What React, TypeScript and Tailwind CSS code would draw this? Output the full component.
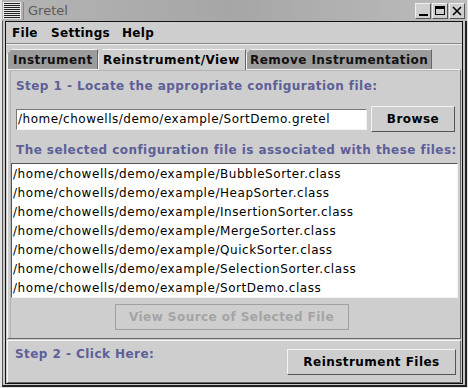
import React from "react";

const files = [
  "/home/chowells/demo/example/BubbleSorter.class",
  "/home/chowells/demo/example/HeapSorter.class",
  "/home/chowells/demo/example/InsertionSorter.class",
  "/home/chowells/demo/example/MergeSorter.class",
  "/home/chowells/demo/example/QuickSorter.class",
  "/home/chowells/demo/example/SelectionSorter.class",
  "/home/chowells/demo/example/SortDemo.class",
];

const bold = { fontFamily: '"DejaVu Sans", "Liberation Sans", sans-serif' };

function WinBtn({ children }: { children: React.ReactNode }) {
  return (
    <div className="w-[16px] h-[16px] border border-t-[#f0f0f0] border-l-[#f0f0f0] border-r-[#555] border-b-[#555] bg-[#cfcfcf] flex items-center justify-center">
      {children}
    </div>
  );
}

const tabClip = { clipPath: "polygon(5px 0, 100% 0, 100% 100%, 0 100%, 0 5px)" };

export default function App() {
  return (
    <div
      className="w-[468px] h-[388px] bg-[#c8c8c8] flex flex-col border-l-2 border-t-0 border-r border-b border-l-[#e4e4e4] border-r-[#e4e4e4] border-b-[#e4e4e4] overflow-hidden"
      style={bold}
    >
      {/* title bar */}
      <div className="h-[21px] flex items-center bg-gradient-to-r from-[#b4b4b4] via-[#a6a6a6] to-[#bdbdbd] pl-[1px] pr-[2px] shrink-0">
        <div className="w-[18px] h-[17px] flex flex-col justify-center gap-[1px] bg-[#e8e8e8] px-[1px] py-[1px]">
          {Array.from({ length: 8 }).map((_, i) => (
            <div key={i} className="h-[1px] bg-[#222]" />
          ))}
        </div>
        <div className="w-[1px] h-[18px] bg-[#888] ml-[2px]" />
        <span className="ml-[4px] text-[13px] text-[#5a5a5a] leading-none" style={{ fontFamily: '"DejaVu Sans", sans-serif', fontWeight: 400 }}>
          Gretel
        </span>
        <div className="ml-auto flex gap-[1px]">
          <WinBtn>
            <div className="w-[9px] h-[2px] bg-black mt-[8px]" />
          </WinBtn>
          <WinBtn>
            <div className="w-[10px] h-[9px] border border-black border-t-[3px]" />
          </WinBtn>
          <WinBtn>
            <svg width="10" height="10" viewBox="0 0 10 10">
              <path d="M1 1 L9 9 M9 1 L1 9" stroke="#000" strokeWidth="1.6" />
            </svg>
          </WinBtn>
        </div>
      </div>

      {/* window frame */}
      <div className="flex-1 flex flex-col border-l border-t-0 border-l-[#555] bg-[#c8c8c8] pl-[2px] pr-[2px] pb-[1px] border-r-2 border-b-2 border-r-[#222] border-b-[#222] min-h-0">
        <div className="flex-1 flex flex-col border border-[#111] bg-[#cecece] min-h-0">
          {/* menu bar */}
          <div className="h-[22px] flex items-center pl-[6px] text-[12px] font-bold text-black tracking-[0.3px] border-b border-b-[#8a8a8a] shrink-0">
            <span className="w-[39px]">File</span>
            <span className="w-[71px]">Settings</span>
            <span>Help</span>
          </div>
          <div className="h-[1px] bg-[#ececec] shrink-0" />

          {/* tabs */}
          <div className="flex items-end h-[24px] pl-[1px] shrink-0 text-[12px] font-bold tracking-[0.45px] whitespace-nowrap">
            <div
              className="h-[20px] w-[91px] bg-[#9c9c9c] border-t border-l border-[#f4f4f4] border-r border-r-[#666] flex items-center pl-[5px] text-[#111]"
              style={tabClip}
            >
              Instrument
            </div>
            <div
              className="h-[21px] w-[148px] bg-[#cecece] border-t border-l border-[#f4f4f4] border-r border-r-[#666] flex items-center pl-[4px] text-black -mb-[1px] relative z-10"
              style={tabClip}
            >
              Reinstrument/View
            </div>
            <div
              className="h-[20px] w-[186px] bg-[#9c9c9c] border-t border-l border-[#f4f4f4] border-r border-r-[#666] flex items-center pl-[3px] text-[#111]"
              style={tabClip}
            >
              Remove Instrumentation
            </div>
          </div>

          {/* tab panel */}
          <div className="mx-[1px] h-[270px] border border-t-[#f4f4f4] border-l-[#f4f4f4] border-r-[#666] border-b-[#666] flex flex-col px-[2px] shrink-0">
            <div className="border border-[#b4b4b4] border-r-0 border-b-0 flex-1 flex flex-col">
              <div className="mt-[7px] ml-[5px] text-[12px] font-bold text-[#5d5f98] tracking-[0.45px] leading-[16px] whitespace-nowrap">
                Step 1 - Locate the appropriate configuration file:
              </div>
              <div className="flex items-center mt-[12px] pl-[5px] pr-[3px]">
                <div className="w-[351px] h-[21px] bg-white border border-[#777] border-r-[#f4f4f4] border-b-[#f4f4f4] flex items-center pl-[1px] text-[12px] text-black tracking-[0.5px] whitespace-nowrap" style={{ fontWeight: 400 }}>
                  /home/chowells/demo/example/SortDemo.gretel
                </div>
                <div className="ml-auto w-[84px] h-[26px] border border-t-[#f4f4f4] border-l-[#f4f4f4] border-r-[#555] border-b-[#555] flex items-center justify-center text-[12px] font-bold text-black tracking-[0.45px]">
                  Browse
                </div>
              </div>
              <div className="mt-[10px] ml-[5px] text-[12px] font-bold text-[#5d5f98] tracking-[0.45px] leading-[16px] whitespace-nowrap">
                The selected configuration file is associated with these files:
              </div>
              <div className="mt-[5px] h-[135px] bg-white border border-[#555] border-r-[#f4f4f4] border-b-[#f4f4f4] flex flex-col pt-[1px] pl-[1px]">
                {files.map((f) => (
                  <div key={f} className="h-[19px] flex items-center text-[12px] text-black tracking-[0.55px] whitespace-nowrap" style={{ fontWeight: 400 }}>
                    {f}
                  </div>
                ))}
              </div>
              <div className="flex justify-center mt-[6px]">
                <div className="w-[234px] h-[26px] border border-[#a0a0a0] flex items-center justify-center text-[12px] font-bold text-[#a4a4a4] tracking-[0.45px] mr-[6px] whitespace-nowrap">
                  View Source of Selected File
                </div>
              </div>
            </div>
          </div>

          {/* bottom panel */}
          <div className="mx-[1px] mt-[1px] flex-1 border border-t-[#f4f4f4] border-l-[#f4f4f4] border-r-[#666] border-b-[#666] flex items-start px-[7px] pt-[5px] pr-[4px]">
            <div className="mt-[0px] text-[12px] font-bold text-[#5d5f98] tracking-[0.45px] leading-[16px] whitespace-nowrap">
              Step 2 - Click Here:
            </div>
            <div className="ml-auto mt-[3px] w-[169px] h-[26px] border border-t-[#f4f4f4] border-l-[#f4f4f4] border-r-[#555] border-b-[#555] flex items-center justify-center text-[12px] font-bold text-black tracking-[0.45px]">
              Reinstrument Files
            </div>
          </div>
        </div>
      </div>
    </div>
  );
}
